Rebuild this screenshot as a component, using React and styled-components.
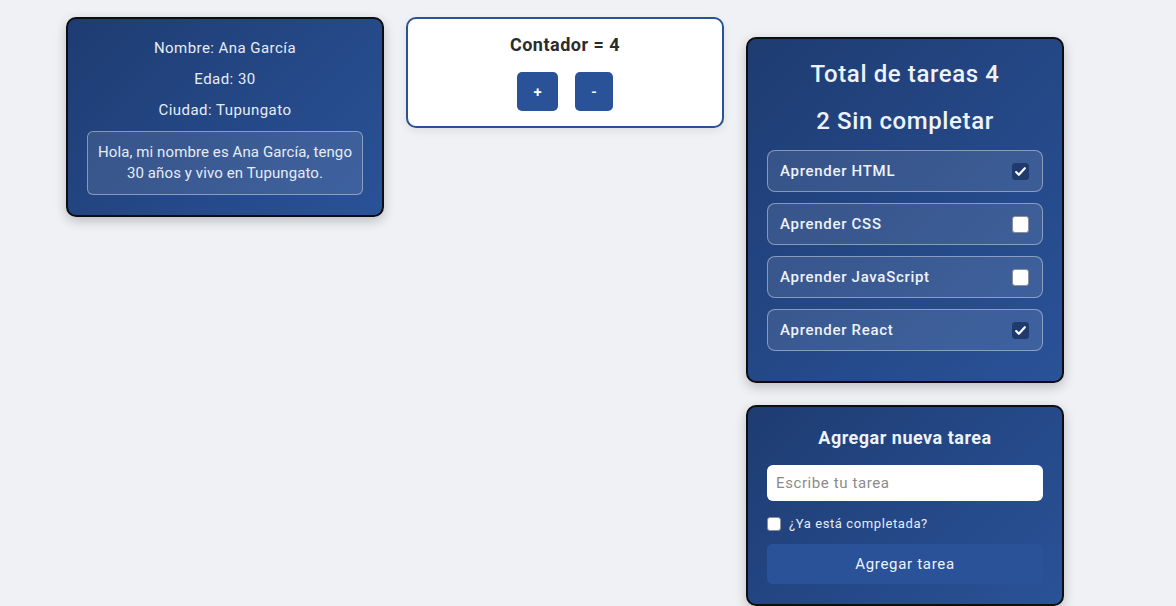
import styled, { createGlobalStyle } from "styled-components";

const GlobalStyle = createGlobalStyle`
  body {
    margin: 0;
    background: #f0f1f5;
    font-family: "Roboto", "Inter", sans-serif;
    letter-spacing: 0.45px;
  }
  * {
    box-sizing: border-box;
  }
`;

const Page = styled.div`
  display: flex;
  align-items: flex-start;
  gap: 22px;
  padding: 17px 0 0 66px;
  height: 606px;
  overflow: hidden;
`;

const Column = styled.div`
  display: flex;
  flex-direction: column;
  gap: 22px;
  margin-top: ${(p) => p.$offset || 0}px;
`;

const BlueCard = styled.div`
  width: 318px;
  padding: ${(p) => p.$pad || "19px 19px 20px"};
  border: 2px solid #0d0d12;
  border-radius: 10px;
  background: linear-gradient(135deg, #1e3c72 0%, #2a5298 100%);
  box-shadow: 0 4px 12px rgba(0, 0, 0, 0.22);
  color: #e6ecf7;
  text-align: center;
`;

const WhiteCard = styled.div`
  width: 318px;
  padding: 15px 19px 15px;
  border: 2px solid #2a5298;
  border-radius: 10px;
  background: #ffffff;
  box-shadow: 0 3px 8px rgba(0, 0, 0, 0.08);
  text-align: center;
`;

const Line = styled.p`
  margin: 0 0 10px;
  font-size: 15px;
  line-height: 21px;
`;

const Greeting = styled.div`
  padding: 10px 6px;
  border: 1px solid rgba(255, 255, 255, 0.4);
  border-radius: 6px;
  background: rgba(255, 255, 255, 0.1);
  font-size: 15px;
  line-height: 21px;
  letter-spacing: 0.1px;
`;

const CounterTitle = styled.h3`
  margin: 0 0 16px;
  font-size: 18px;
  line-height: 22px;
  font-weight: 700;
  letter-spacing: 0.5px;
  color: #2b2b2b;
`;

const ButtonRow = styled.div`
  display: flex;
  justify-content: center;
  gap: 17px;
`;

const SmallButton = styled.button`
  width: ${(p) => p.$w}px;
  height: 39px;
  border: none;
  border-radius: 5px;
  background: #2a5298;
  color: #fff;
  font-family: inherit;
  font-size: 15px;
  font-weight: 600;
  cursor: pointer;
`;

const BigTitle = styled.h2`
  margin: 0 0 ${(p) => p.$mb}px;
  font-size: 24px;
  line-height: 28px;
  font-weight: 500;
  letter-spacing: 0.6px;
  color: #eef2fb;
`;

const TaskList = styled.div`
  display: flex;
  flex-direction: column;
  gap: 11px;
  margin-bottom: 10px;
`;

const TaskItem = styled.div`
  display: flex;
  align-items: center;
  justify-content: space-between;
  height: 42px;
  padding: 0 13px 0 12px;
  border: 1px solid rgba(255, 255, 255, 0.4);
  border-radius: 8px;
  background: rgba(255, 255, 255, 0.1);
  font-size: 15px;
  font-weight: 500;
  letter-spacing: 0.7px;
  color: #eef2fb;
`;

const Box = styled.span`
  display: flex;
  align-items: center;
  justify-content: center;
  width: ${(p) => p.$size}px;
  height: ${(p) => p.$size}px;
  border-radius: 3px;
  background: ${(p) => (p.$checked ? "#1f3a6d" : "#ffffff")};
  border: 1px solid ${(p) => (p.$checked ? "#1f3a6d" : "#8a8f99")};
`;

const FormTitle = styled.h3`
  margin: 0 0 16px;
  font-size: 18px;
  line-height: 22px;
  font-weight: 700;
  letter-spacing: 0.5px;
  color: #eef2fb;
`;

const TextInput = styled.input`
  display: block;
  width: 100%;
  height: 36px;
  padding: 0 9px;
  border: none;
  border-radius: 6px;
  background: #fff;
  font-family: inherit;
  font-size: 15px;
  letter-spacing: 0.6px;
  &::placeholder {
    color: #8b8b8b;
  }
`;

const CheckRow = styled.label`
  display: flex;
  align-items: center;
  gap: 8px;
  margin: 15px 0 13px;
  font-size: 13px;
  letter-spacing: 0.6px;
  color: #e6ecf7;
`;

const SubmitButton = styled.button`
  display: block;
  width: 100%;
  height: 40px;
  border: none;
  border-radius: 5px;
  background: #2a5298;
  color: #eef2fb;
  font-family: inherit;
  font-size: 15px;
  letter-spacing: 0.7px;
  cursor: pointer;
`;

const CheckMark = () => (
  <svg width="13" height="13" viewBox="0 0 24 24" fill="none" stroke="#fff" strokeWidth="4" strokeLinecap="round" strokeLinejoin="round">
    <path d="M4 13l5 5L20 6" />
  </svg>
);

const tasks = [
  { name: "Aprender HTML", done: true },
  { name: "Aprender CSS", done: false },
  { name: "Aprender JavaScript", done: false },
  { name: "Aprender React", done: true },
];

export default function App() {
  const pending = tasks.filter((t) => !t.done).length;
  return (
    <>
      <GlobalStyle />
      <Page>
        <BlueCard>
          <Line>Nombre: Ana García</Line>
          <Line>Edad: 30</Line>
          <Line>Ciudad: Tupungato</Line>
          <Greeting>
            Hola, mi nombre es Ana García, tengo 30 años y vivo en Tupungato.
          </Greeting>
        </BlueCard>

        <WhiteCard>
          <CounterTitle>Contador = 4</CounterTitle>
          <ButtonRow>
            <SmallButton $w={41}>+</SmallButton>
            <SmallButton $w={38}>-</SmallButton>
          </ButtonRow>
        </WhiteCard>

        <Column $offset={20}>
          <BlueCard $pad="21px 19px 20px">
            <BigTitle $mb={19}>Total de tareas {tasks.length}</BigTitle>
            <BigTitle $mb={15}>{pending} Sin completar</BigTitle>
            <TaskList>
              {tasks.map((t) => (
                <TaskItem key={t.name}>
                  <span>{t.name}</span>
                  <Box $size={17} $checked={t.done}>
                    {t.done && <CheckMark />}
                  </Box>
                </TaskItem>
              ))}
            </TaskList>
          </BlueCard>

          <BlueCard $pad="20px 19px 20px">
            <FormTitle>Agregar nueva tarea</FormTitle>
            <TextInput placeholder="Escribe tu tarea" />
            <CheckRow>
              <Box $size={14} />
              ¿Ya está completada?
            </CheckRow>
            <SubmitButton>Agregar tarea</SubmitButton>
          </BlueCard>
        </Column>
      </Page>
    </>
  );
}
